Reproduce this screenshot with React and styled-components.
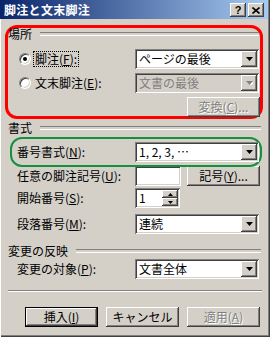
import React from "react";
import styled, { createGlobalStyle } from "styled-components";

const GlobalStyle = createGlobalStyle`
  html, body { margin: 0; padding: 0; background: #d4d0c8; }
  body {
    font-family: "Noto Sans CJK JP", "Liberation Sans", sans-serif;
    font-size: 12px;
    color: #000;
  }
  * { box-sizing: border-box; }
`;

const raised = `inset -1px -1px #404040, inset 1px 1px #fff, inset -2px -2px #808080, inset 2px 2px #d4d0c8`;
const sunken = `inset 1px 1px #808080, inset -1px -1px #fff, inset 2px 2px #404040, inset -2px -2px #d4d0c8`;

const Window = styled.div`
  width: 270px;
  height: 337px;
  background: #d4d0c8;
  display: flex;
  flex-direction: column;
  box-shadow: inset 1px 0 #fff, inset -1px -1px #404040, inset -2px -2px #808080;
  overflow: hidden;
`;

const TitleBar = styled.div`
  height: 19px;
  margin-right: 2px;
  display: flex;
  align-items: center;
  padding: 0 4px 0 4px;
  background: linear-gradient(to right, #0a246a, #a6caf0);
`;

const Title = styled.span`
  flex: 1;
  color: #fff;
  font-weight: bold;
  font-size: 12px;
  line-height: 14px;
  letter-spacing: 0.3px;
`;

const CapButtons = styled.div`
  display: flex;
  gap: 2px;
  align-self: flex-start;
  margin-top: 3px;
`;

const CapButton = styled.span`
  width: 16px;
  height: 14px;
  display: flex;
  align-items: center;
  justify-content: center;
  background: #d4d0c8;
  box-shadow: ${raised};
  font-family: "Liberation Sans", sans-serif;
  font-weight: bold;
  font-size: 11px;
  line-height: 11px;
`;

const Body = styled.div`
  flex: 1;
  display: flex;
  flex-direction: column;
  padding: 6px 7px 0 5px;
`;

const Highlight = styled.div`
  border: ${(p) => p.$width || 2}px solid ${(p) => p.$color};
  border-radius: 12px;
  display: flex;
  flex-direction: column;
  margin: ${(p) => p.$margin || "0"};
  padding: ${(p) => p.$pad || "0"};
  position: relative;
  z-index: 1;
`;

const GroupHeader = styled.div`
  display: flex;
  align-items: center;
  height: 14px;
  line-height: 14px;
  margin-top: ${(p) => p.$mt || 0}px;
  padding-left: ${(p) => p.$pl || 0}px;
  padding-right: ${(p) => p.$pr || 0}px;
  &::after {
    content: "";
    flex: 1;
    height: 2px;
    margin-left: 8px;
    border-top: 1px solid #808080;
    border-bottom: 1px solid #fff;
  }
`;

const Row = styled.div`
  display: flex;
  align-items: center;
  height: 20px;
  margin-top: ${(p) => p.$mt || 0}px;
  margin-bottom: ${(p) => p.$mb || 0}px;
  padding-left: ${(p) => p.$pl || 0}px;
  padding-right: ${(p) => p.$pr || 0}px;
  justify-content: ${(p) => (p.$end ? "flex-end" : "flex-start")};
`;

const Label = styled.span`
  flex: 1;
  white-space: nowrap;
  line-height: 14px;
`;

const RadioLabel = styled.label`
  flex: 1;
  display: flex;
  align-items: center;
  gap: 2px;
  white-space: nowrap;
  line-height: 14px;
`;

const Radio = styled.span`
  width: 12px;
  height: 12px;
  border-radius: 50%;
  background: #fff;
  border: 1px solid;
  border-color: #808080 #fff #fff #808080;
  box-shadow: inset 1px 1px #404040, inset -1px -1px #d4d0c8;
  display: flex;
  align-items: center;
  justify-content: center;
  &::after {
    content: "";
    width: 4px;
    height: 4px;
    border-radius: 50%;
    background: ${(p) => (p.$checked ? "#000" : "transparent")};
  }
`;

const FocusText = styled.span`
  padding: 0 1px;
  outline: ${(p) => (p.$focus ? "1px dotted #000" : "none")};
  margin-left: 1px;
`;

const Combo = styled.div`
  width: 124px;
  height: 20px;
  display: flex;
  align-items: center;
  padding: 2px;
  background: ${(p) => (p.$disabled ? "#d4d0c8" : "#fff")};
  box-shadow: ${sunken};
`;

const ComboText = styled.span`
  flex: 1;
  padding-left: 2px;
  line-height: 14px;
  white-space: nowrap;
  color: ${(p) => (p.$disabled ? "#808080" : "#000")};
`;

const DropButton = styled.span`
  width: 16px;
  height: 16px;
  display: flex;
  align-items: center;
  justify-content: center;
  background: #d4d0c8;
  box-shadow: ${raised};
`;

const TextField = styled.div`
  width: ${(p) => p.$w}px;
  height: 20px;
  display: flex;
  align-items: center;
  padding: 2px;
  background: #fff;
  box-shadow: ${sunken};
  margin-right: ${(p) => p.$mr || 0}px;
`;

const SpinButtons = styled.div`
  width: 16px;
  height: 100%;
  display: flex;
  flex-direction: column;
`;

const SpinPart = styled.span`
  flex: 1;
  display: flex;
  align-items: center;
  justify-content: center;
  background: #d4d0c8;
  box-shadow: ${raised};
`;

const Button = styled.button`
  width: 73px;
  height: 20px;
  padding: 0;
  font: inherit;
  font-size: 12px;
  line-height: 14px;
  background: #d4d0c8;
  color: ${(p) => (p.disabled ? "#808080" : "#000")};
  text-shadow: ${(p) => (p.disabled ? "1px 1px #fff" : "none")};
  border: ${(p) => (p.$default ? "1px solid #000" : "none")};
  box-shadow: ${raised};
`;

const Separator = styled.div`
  height: 2px;
  border-top: 1px solid #808080;
  border-bottom: 1px solid #fff;
  margin: ${(p) => p.$margin};
`;

const ButtonBar = styled.div`
  display: flex;
  justify-content: flex-end;
  gap: 8px;
  margin-top: 15px;
  padding-right: 3px;
`;

const Arrow = ({ disabled }) => (
  <svg width="7" height="4" viewBox="0 0 7 4">
    {disabled && <polygon points="1,1 8,1 4.5,5" fill="#fff" />}
    <polygon points="0,0 7,0 3.5,4" fill={disabled ? "#808080" : "#000"} />
  </svg>
);

const Select = ({ value, disabled }) => (
  <Combo $disabled={disabled}>
    <ComboText $disabled={disabled}>{value}</ComboText>
    <DropButton>
      <Arrow disabled={disabled} />
    </DropButton>
  </Combo>
);

export default function App() {
  return (
    <>
      <GlobalStyle />
      <Window>
        <TitleBar>
          <Title>脚注と文末脚注</Title>
          <CapButtons>
            <CapButton>?</CapButton>
            <CapButton>
              <svg width="8" height="7" viewBox="0 0 8 7">
                <path d="M0.5 0.5 L7.5 6.5 M7.5 0.5 L0.5 6.5" stroke="#000" strokeWidth="1.6" />
              </svg>
            </CapButton>
          </CapButtons>
        </TitleBar>
        <Body>
          <Highlight $color="#ff0000" $width={3}>
            <GroupHeader $mt={-1} $pr={1}>場所</GroupHeader>
            <Row $mt={8} $pl={11} $pr={1}>
              <RadioLabel>
                <Radio $checked />
                <FocusText $focus>
                  脚注(<u>F</u>):
                </FocusText>
              </RadioLabel>
              <Select value="ページの最後" />
            </Row>
            <Row $mt={4} $pl={11} $pr={1}>
              <RadioLabel>
                <Radio />
                <FocusText>
                  文末脚注(<u>E</u>):
                </FocusText>
              </RadioLabel>
              <Select value="文書の最後" disabled />
            </Row>
            <Row $mt={4} $mb={-1} $end>
              <Button disabled>
                変換(<u>C</u>)...
              </Button>
            </Row>
          </Highlight>

          <GroupHeader $mt={2} $pl={3} $pr={2}>書式</GroupHeader>
          <Highlight $color="#14913f" $margin="2px 1px 0 5px" $pad="3px 0">
            <Row $pl={5} $pr={1}>
              <Label>
                番号書式(<u>N</u>):
              </Label>
              <Select value="1, 2, 3, …" />
            </Row>
          </Highlight>
          <Row $mt={-1} $pl={12} $pr={3}>
            <Label>
              任意の脚注記号(<u>U</u>):
            </Label>
            <TextField $w={46} $mr={6} />
            <Button>
              記号(<u>Y</u>)...
            </Button>
          </Row>
          <Row $mt={2} $pl={12} $pr={4}>
            <Label>
              開始番号(<u>S</u>):
            </Label>
            <TextField $w={45} $mr={79}>
              <ComboText>1</ComboText>
              <SpinButtons>
                <SpinPart>
                  <svg width="5" height="3" viewBox="0 0 5 3">
                    <polygon points="2.5,0 5,3 0,3" fill="#000" />
                  </svg>
                </SpinPart>
                <SpinPart>
                  <svg width="5" height="3" viewBox="0 0 5 3">
                    <polygon points="0,0 5,0 2.5,3" fill="#000" />
                  </svg>
                </SpinPart>
              </SpinButtons>
            </TextField>
          </Row>
          <Row $mt={6} $pl={12} $pr={4}>
            <Label>
              段落番号(<u>M</u>):
            </Label>
            <Select value="連続" />
          </Row>

          <GroupHeader $mt={10} $pl={3} $pr={2}>変更の反映</GroupHeader>
          <Row $mt={1} $pl={12} $pr={4}>
            <Label>
              変更の対象(<u>P</u>):
            </Label>
            <Select value="文書全体" />
          </Row>

          <Separator $margin="11px 1px 0 3px" />

          <ButtonBar>
            <Button $default>
              挿入(<u>I</u>)
            </Button>
            <Button>キャンセル</Button>
            <Button disabled>
              適用(<u>A</u>)
            </Button>
          </ButtonBar>
        </Body>
      </Window>
    </>
  );
}
